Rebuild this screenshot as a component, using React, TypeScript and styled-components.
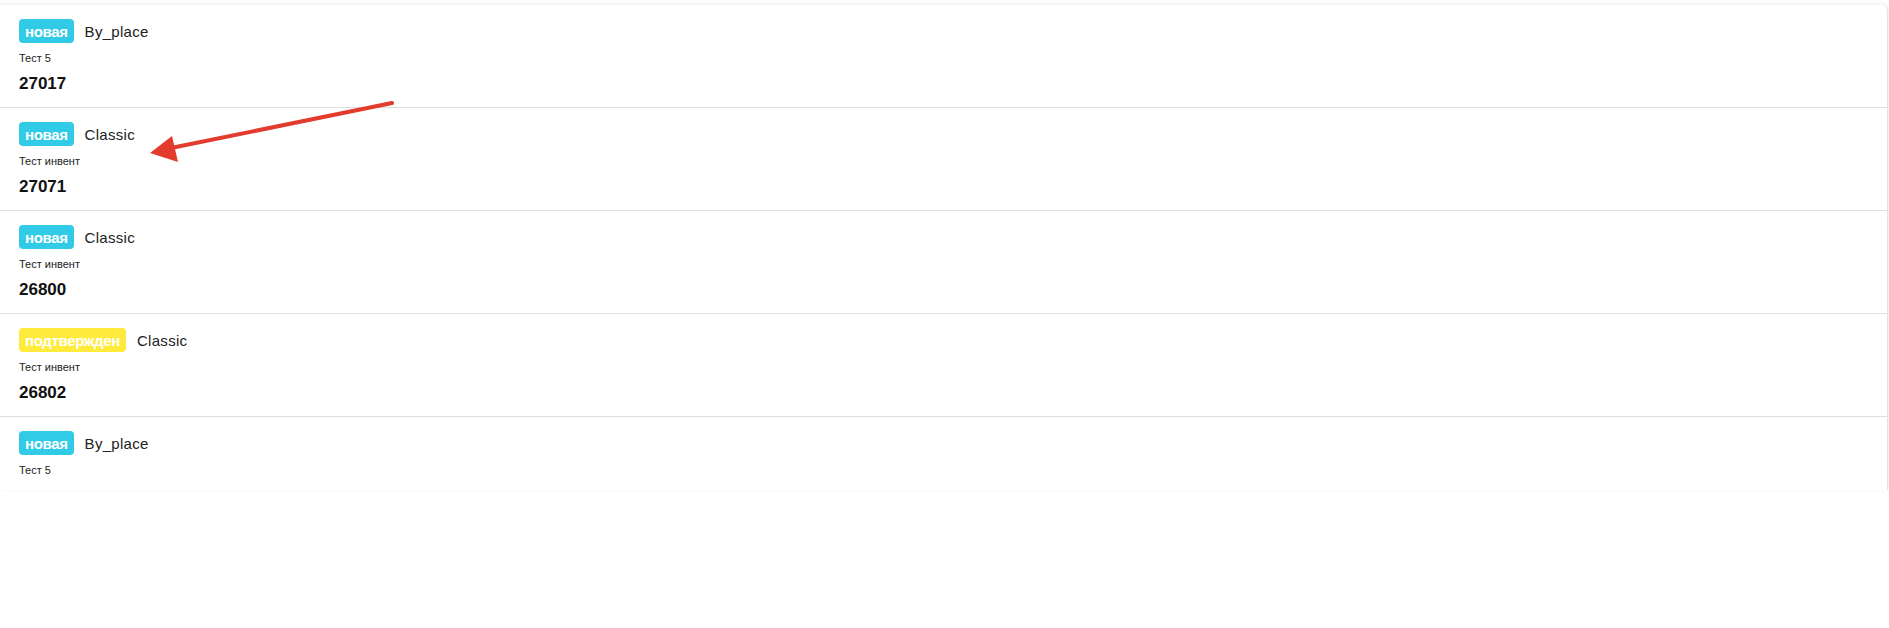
import styled, {createGlobalStyle} from "styled-components";

type TypeOrder = {
    status: 'new' | 'confirmed',
    kind: string,
    title: string,
    id?: string
}

const GlobalStyle = createGlobalStyle`
    html, body {
        margin: 0;
        padding: 0;
        background: #fff;
        font-family: "Liberation Sans", Arial, sans-serif;
    }
`

const SPage = styled.div`
    position: relative;
    width: 1889px;
    height: 628px;
    padding-top: 5px;
    box-sizing: border-box;
`

const SCard = styled.div`
    width: 1888px;
    height: 485px;
    overflow: hidden;
    background: #fff;
    border-radius: 0 6px 0 0;
    border-right: 1px solid #e2e2e2;
    box-sizing: border-box;
    box-shadow: 0 -1px 4px rgba(0, 0, 0, 0.08);
`

const SRow = styled.div`
    height: 103px;
    box-sizing: border-box;
    padding: 14px 19px 0;
    border-bottom: 1px solid #dedede;
`

const SHead = styled.div`
    display: flex;
    align-items: center;
    gap: 11px;
`

const SBadge = styled.span<{ $status: 'new' | 'confirmed' }>`
    display: inline-flex;
    align-items: center;
    height: 24px;
    padding: 1px 6px 0;
    box-sizing: border-box;
    border-radius: 4px;
    background: ${({$status}) => $status === 'new' ? '#31cbe8' : '#ffeb3b'};
    color: #fff;
    font-size: 15px;
    font-weight: 700;
    letter-spacing: -0.35px;
`

const SKind = styled.span`
    font-size: 15px;
    color: #222;
    letter-spacing: 0.3px;
`

const STitle = styled.div`
    margin-top: 9px;
    font-size: 11px;
    line-height: 13px;
    color: #222;
`

const SNumber = styled.div`
    margin-top: 9px;
    font-size: 17px;
    font-weight: 700;
    line-height: 20px;
    color: #111;
`

const SArrow = styled.svg`
    position: absolute;
    left: 0;
    top: 0;
    pointer-events: none;
`

const orders: TypeOrder[] = [
    {status: 'new', kind: 'By_place', title: 'Тест 5', id: '27017'},
    {status: 'new', kind: 'Classic', title: 'Тест инвент', id: '27071'},
    {status: 'new', kind: 'Classic', title: 'Тест инвент', id: '26800'},
    {status: 'confirmed', kind: 'Classic', title: 'Тест инвент', id: '26802'},
    {status: 'new', kind: 'By_place', title: 'Тест 5'},
]

const OrderRow = ({status, kind, title, id}: TypeOrder) => (
    <SRow>
        <SHead>
            <SBadge $status={status}>{status === 'new' ? 'новая' : 'подтвержден'}</SBadge>
            <SKind>{kind}</SKind>
        </SHead>
        <STitle>{title}</STitle>
        {id && <SNumber>{id}</SNumber>}
    </SRow>
)

export default function App() {
    return (<>
        <GlobalStyle/>
        <SPage>
            <SCard>
                {orders.map((o, i) => <OrderRow key={i} {...o}/>)}
            </SCard>
            <SArrow width="420" height="200" viewBox="0 0 420 200">
                <line x1="392" y1="103" x2="166" y2="149" stroke="#e33b2e" strokeWidth="4" strokeLinecap="round"/>
                <polygon points="150,153 172,136 178,162" fill="#e33b2e"/>
            </SArrow>
        </SPage>
    </>)
}
